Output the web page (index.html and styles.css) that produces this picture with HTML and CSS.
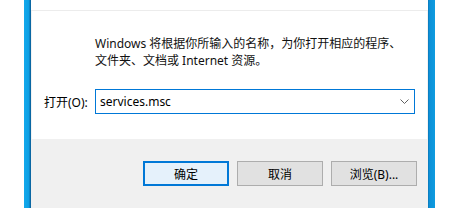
FILE: index.html
```html
<html>
<head>
    <link rel="stylesheet" href="styles.css">
</head>
<body>
<div class="screen">
    <div class="frame frameLeft"></div>
    <div class="dialog">
        <div class="titleBar">
            <span class="title">运行</span>
            <span class="close">✕</span>
        </div>
        <div class="content">
            <p class="desc">Windows 将根据你所输入的名称，为你打开相应的程序、<br>文件夹、文档或 Internet 资源。</p>
            <div class="openRow">
                <span class="openLabel">打开(O):</span>
                <div class="combo">
                    <span class="comboText">services.msc</span>
                    <svg class="chevron" width="9" height="5" viewBox="0 0 9 5">
                        <path d="M0.5 0.5 L4.5 4.5 L8.5 0.5" fill="none" stroke="#606060" stroke-width="1"/>
                    </svg>
                </div>
            </div>
        </div>
        <div class="footer">
            <div class="btn primary">确定</div>
            <div class="btn">取消</div>
            <div class="btn">浏览(B)...</div>
        </div>
    </div>
    <div class="frame frameRight"></div>
</div>
</body>
</html>
```

FILE: styles.css
```css
body {
    margin: 0;
    background-color: white;
    font-family: "Noto Sans", "Noto Sans CJK SC", sans-serif;
    font-size: 12px;
    color: black;
}
.screen {
    display: flex;
    width: 454px;
    height: 208px;
    padding-left: 24px;
    box-sizing: border-box;
    overflow: hidden;
}
.frame {
    width: 7px;
    flex-shrink: 0;
}
.frameLeft {
    background: linear-gradient(to right, #13a9ec 0px, #0b9ee3 5px, #0a6fae 6px, #0a5f98 7px);
}
.frameRight {
    background: linear-gradient(to right, #0a6fae 0px, #0c8fd6 1px, #0e9be0 7px);
}
.dialog {
    width: 397px;
    display: flex;
    flex-direction: column;
    background-color: white;
}
.titleBar {
    height: 10px;
    border-bottom: 1px solid #ececec;
    display: flex;
    justify-content: space-between;
    align-items: flex-end;
    overflow: hidden;
    color: #e6e6e6;
    font-size: 12px;
}
.title {
    margin-left: 12px;
    margin-bottom: 7px;
}
.close {
    margin-right: 8px;
    margin-bottom: 7px;
}
.content {
    height: 128px;
    border-left: 1px solid #f2f2f2;
    border-right: 1px solid #f2f2f2;
}
.desc {
    margin: 0;
    padding: 24px 0 0 63px;
    line-height: 17px;
    color: #111;
}
.openRow {
    display: flex;
    align-items: center;
    margin-top: 20px;
    padding-left: 12px;
}
.openLabel {
    width: 51px;
}
.combo {
    width: 320px;
    height: 25px;
    box-sizing: border-box;
    border: 1px solid #0078d7;
    display: flex;
    align-items: center;
    justify-content: space-between;
    padding: 0 5px 0 4px;
}
.comboText {
    font-size: 12px;
}
.footer {
    flex: 1;
    background-color: #f0f0f0;
    display: flex;
    justify-content: flex-end;
    align-items: flex-start;
    gap: 8px;
    padding: 22px 11px 0 0;
}
.btn {
    width: 86px;
    height: 25px;
    box-sizing: border-box;
    border: 1px solid #adadad;
    background-color: #e1e1e1;
    display: flex;
    align-items: center;
    justify-content: center;
}
.btn.primary {
    border: 2px solid #0078d7;
    background-color: #e5f1fb;
}
```
